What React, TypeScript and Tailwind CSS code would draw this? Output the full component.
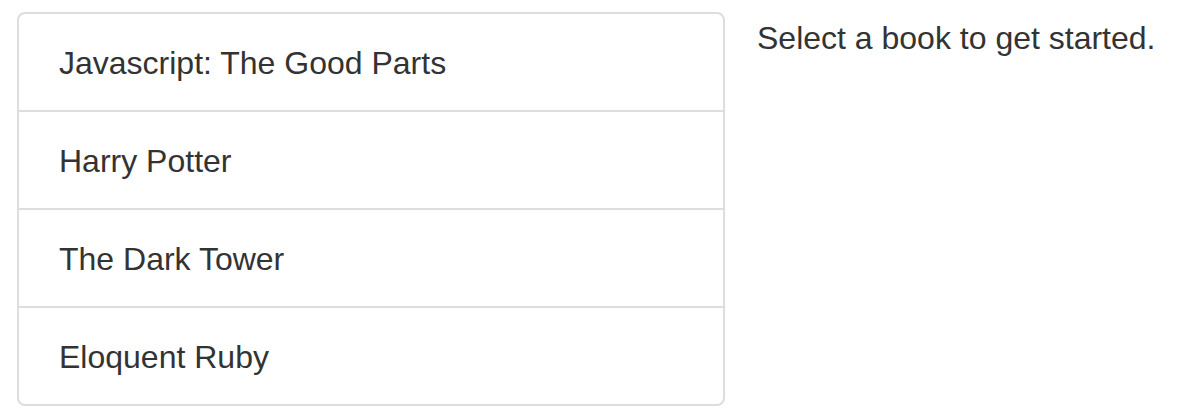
const books = ["Javascript: The Good Parts", "Harry Potter", "The Dark Tower", "Eloquent Ruby"];

export default function App() {
  return (
    <div
      className="flex gap-[32px] pl-[17px] pt-[12px] bg-white text-[#333] text-[32px] leading-[44px] min-h-[418px]"
      style={{ fontFamily: '"Liberation Sans", Arial, sans-serif' }}
    >
      <ul className="w-[708px] shrink-0 border-2 border-[#ddd] rounded-[8px] divide-y-2 divide-[#ddd] self-start">
        {books.map((book) => (
          <li key={book} className="px-[40px] pt-[27px] pb-[25px] cursor-pointer">
            {book}
          </li>
        ))}
      </ul>
      <div className="pt-[4px]">Select a book to get started.</div>
    </div>
  );
}
